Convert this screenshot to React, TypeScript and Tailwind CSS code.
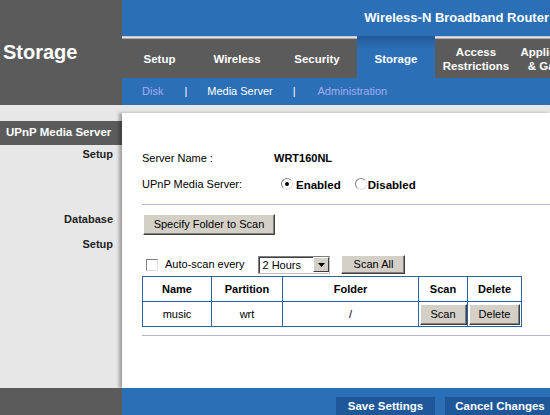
import React from "react";

const BLUE = "bg-[#2b6fb6]";

function Tab({ label, w, active }: { label: React.ReactNode; w: string; active?: boolean }) {
  if (active) {
    return (
      <div className={`${w} shrink-0 flex flex-col bg-gradient-to-b from-[#22599a] via-[#2b6fb6] via-30% to-[#2b6fb6]`}>
        <div className="flex flex-1 items-center justify-center pt-[5px] text-[11.5px] font-bold text-white">
          {label}
        </div>
      </div>
    );
  }
  return (
    <div className={`${w} shrink-0 flex flex-col`}>
      <div className="h-[3px] bg-gradient-to-b from-[#b9b9c4] via-[#e4e4ea] to-[#8c8c94]" />
      <div className="flex flex-1 items-center justify-center bg-[#5b5b5b] text-center text-[11.5px] font-bold leading-[14px] text-white">
        {label}
      </div>
    </div>
  );
}

function WinButton({ children, className = "" }: { children: React.ReactNode; className?: string }) {
  return (
    <button
      className={`flex items-center justify-center border border-t-white border-l-white border-r-[#404040] border-b-[#404040] bg-[#d4d0c8] text-[11px] text-black shadow-[inset_-1px_-1px_0_#808080] ${className}`}
    >
      {children}
    </button>
  );
}

function Radio({ checked }: { checked?: boolean }) {
  return (
    <span className="flex h-[12px] w-[12px] items-center justify-center rounded-full border border-t-[#808080] border-l-[#808080] border-r-[#e0e0e0] border-b-[#e0e0e0] bg-white">
      {checked && <span className="h-[4px] w-[4px] rounded-full bg-black" />}
    </span>
  );
}

export default function App() {
  return (
    <div className="flex h-[415px] w-[550px] flex-col overflow-hidden bg-[#e7e7e7] font-['Liberation_Sans',Arial,sans-serif] text-[11px] text-black">
      {/* header */}
      <div className="flex h-[105px] shrink-0">
        <div className="flex w-[122px] shrink-0 items-center bg-[#5b5b5b] pb-[2px] pl-[3px]">
          <span className="text-[20px] font-bold text-white">Storage</span>
        </div>
        <div className="flex min-w-0 flex-1 flex-col overflow-hidden">
          <div className={`flex h-[36px] shrink-0 items-center justify-end ${BLUE} pr-[1px]`}>
            <span className="whitespace-nowrap text-[13px] font-bold text-white">Wireless-N Broadband Router</span>
          </div>
          <div className="flex h-[42px] shrink-0">
            <Tab label="Setup" w="w-[75px]" />
            <Tab label="Wireless" w="w-[80px]" />
            <Tab label="Security" w="w-[80px]" />
            <Tab label="Storage" w="w-[78px]" active />
            <Tab
              label={
                <>
                  Access
                  <br />
                  Restrictions
                </>
              }
              w="w-[82px]"
            />
            <Tab
              label={
                <>
                  Applications
                  <br />& Gaming
                </>
              }
              w="w-[76px]"
            />
          </div>
          <div className={`flex h-[27px] shrink-0 items-center ${BLUE} pl-[20px] text-[11px]`}>
            <span className="text-[#a4acf2]">Disk</span>
            <span className="ml-[21px] text-white">|</span>
            <span className="ml-[20px] text-white">Media Server</span>
            <span className="ml-[20px] text-white">|</span>
            <span className="ml-[22px] text-[#a4acf2]">Administration</span>
          </div>
        </div>
      </div>

      {/* body */}
      <div className="flex min-h-0 flex-1">
        <div className="flex w-[122px] shrink-0 flex-col pt-[16px] font-bold">
          <div className="flex h-[24px] items-center bg-[#5b5b5b] pl-[6px] text-[11.5px] text-white">UPnP Media Server</div>
          <div className="mt-[1px] pr-[9px] text-right text-[11px] text-[#222]">Setup</div>
          <div className="mt-[48px] pr-[9px] text-right text-[11px] text-[#222]">Database</div>
          <div className="mt-[9px] pr-[9px] text-right text-[11px] text-[#222]">Setup</div>
        </div>
        <div className="flex min-w-0 flex-1 flex-col pt-[8px]">
          <div className="flex flex-1 flex-col bg-white pl-[20px] shadow-[-3px_0_3px_rgba(0,0,0,0.3)]">
            <div className="mt-[38px] flex h-[14px] items-center">
              <span className="w-[132px]">Server Name :</span>
              <span className="font-bold">WRT160NL</span>
            </div>
            <div className="mt-[11px] flex h-[16px] items-center">
              <span className="w-[139px]">UPnP Media Server:</span>
              <span className="flex items-center">
                <Radio checked />
                <span className="ml-[3px] mt-[3px] text-[11.5px] font-bold">Enabled</span>
              </span>
              <span className="ml-[14px] flex items-center">
                <Radio />
                <span className="ml-[1px] mt-[3px] text-[11.5px] font-bold">Disabled</span>
              </span>
            </div>
            <div className="mt-[12px] h-px bg-[#b4b4d6]" />
            <WinButton className="ml-[1px] mt-[9px] h-[21px] w-[132px]">Specify Folder to Scan</WinButton>
            <div className="mt-[20px] flex h-[19px] items-center">
              <span className="ml-[4px] h-[12px] w-[12px] border border-t-[#808080] border-l-[#808080] border-r-[#e0e0e0] border-b-[#e0e0e0] bg-white" />
              <span className="ml-[7px]">Auto-scan every</span>
              <span className="ml-[14px] flex h-[18px] w-[72px] items-center justify-between border border-t-[#808080] border-l-[#808080] border-r-[#c0c0c0] border-b-[#c0c0c0] bg-white pl-[3px] shadow-[inset_1px_1px_0_#404040]">
                <span className="mt-[1px]">2 Hours</span>
                <span className="flex h-[15px] w-[16px] items-center justify-center border border-t-white border-l-white border-r-[#404040] border-b-[#404040] bg-[#d4d0c8]">
                  <svg width="7" height="4" viewBox="0 0 7 4">
                    <path d="M0 0h7L3.5 4z" fill="#000" />
                  </svg>
                </span>
              </span>
              <WinButton className="ml-[11px] h-[19px] w-[64px]">Scan All</WinButton>
            </div>
            <table className="mt-[2px] w-[380px] border-collapse border border-[#2c62a6] text-center">
              <thead>
                <tr className="h-[25px] font-bold">
                  <td className="w-[69px] border border-[#2c62a6]">Name</td>
                  <td className="w-[71px] border border-[#2c62a6]">Partition</td>
                  <td className="w-[136px] border border-[#2c62a6]">Folder</td>
                  <td className="w-[49px] border border-[#2c62a6]">Scan</td>
                  <td className="w-[54px] border border-[#2c62a6]">Delete</td>
                </tr>
              </thead>
              <tbody>
                <tr className="h-[25px]">
                  <td className="border border-[#2c62a6]">music</td>
                  <td className="border border-[#2c62a6]">wrt</td>
                  <td className="border border-[#2c62a6]">/</td>
                  <td className="border border-[#2c62a6] p-0">
                    <WinButton className="mx-auto h-[21px] w-[47px]">Scan</WinButton>
                  </td>
                  <td className="border border-[#2c62a6] p-0">
                    <WinButton className="mx-auto h-[21px] w-[51px]">Delete</WinButton>
                  </td>
                </tr>
              </tbody>
            </table>
            <div className="mt-[8px] h-px bg-[#b4b4d6]" />
          </div>
        </div>
      </div>

      {/* footer */}
      <div className="flex h-[27px] shrink-0">
        <div className="w-[122px] shrink-0 bg-[#5b5b5b]" />
        <div className={`flex min-w-0 flex-1 items-end overflow-hidden ${BLUE} pl-[214px]`}>
          <div className="flex h-[18px] w-[99px] shrink-0 items-center justify-center bg-[#1e5898] pt-[1px] text-[11.5px] font-bold text-white">
            Save Settings
          </div>
          <div className="ml-[10px] flex h-[18px] w-[110px] shrink-0 items-center justify-center bg-[#1e5898] pt-[1px] text-[11.5px] font-bold text-white">
            Cancel Changes
          </div>
        </div>
      </div>
    </div>
  );
}
